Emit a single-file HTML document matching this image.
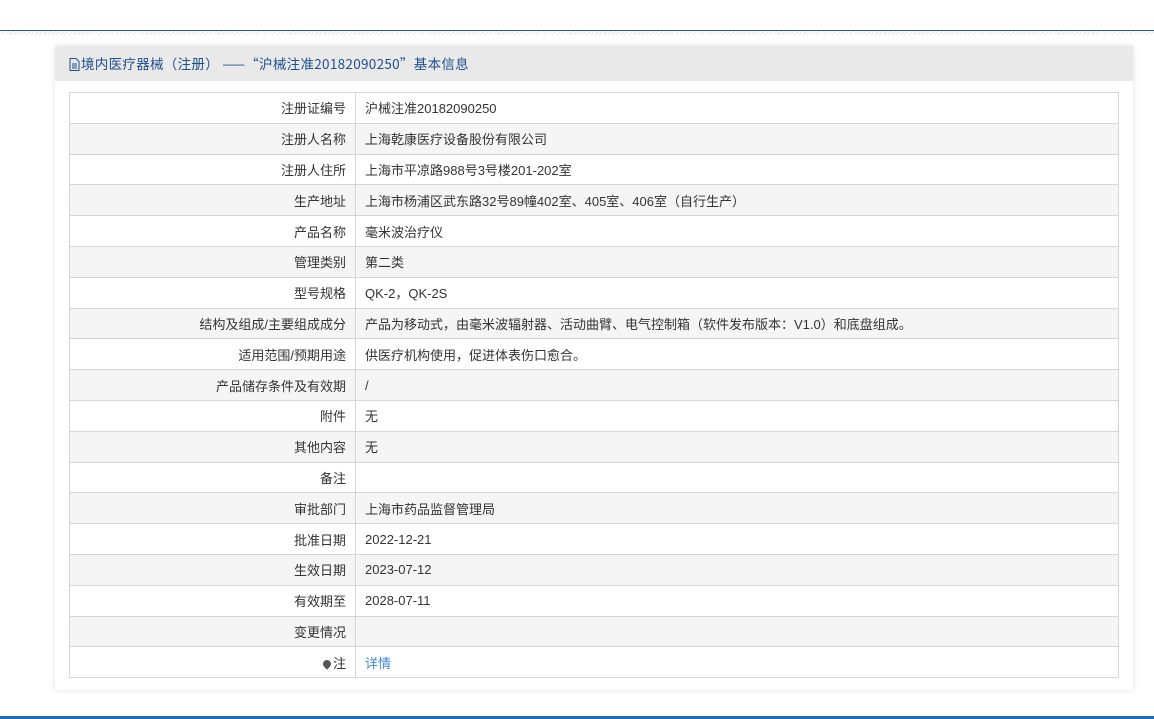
<!DOCTYPE html>
<html><head><meta charset="utf-8"><style>
*{margin:0;padding:0;box-sizing:border-box}
body{width:1154px;height:719px;background:#fff;font-family:"Liberation Sans","Noto Sans CJK SC",sans-serif;font-size:13px;color:#333;position:relative;overflow:hidden}
.topline{position:absolute;left:0;top:30px;width:1154px;height:1px;background:#2a5a9f}
.hatch{position:absolute;left:0;top:31px;width:1154px;height:4px;background:repeating-linear-gradient(135deg,#e6e6e6 0 1px,#fff 1px 3px)}
.botline{position:absolute;left:0;top:716px;width:1154px;height:3px;background:#1f6bb5}
.panel{position:absolute;left:55px;top:46px;width:1078px;height:644px;background:#fff;box-shadow:0 0 6px rgba(0,0,0,.12)}
.head{height:35px;background:#e9e9e9;color:#1d4f8f;font-size:13.5px;line-height:35px;padding-left:14px;font-family:"Noto Sans CJK SC","Liberation Sans",sans-serif;letter-spacing:0.3px}
.head svg{vertical-align:-2px;margin-right:1px}
table{position:absolute;left:14px;top:46px;width:1050px;border-collapse:collapse;border:1px solid #ccc}
td{height:30.8px;border:1px solid #d6d6d6;padding:0 9px;white-space:nowrap}
td.l{width:286px;text-align:right}
tr:nth-child(even) td{background:#f5f5f5}
a{color:#3a8ad8;text-decoration:none}
.dot{display:inline-block;width:8px;height:8px;border-radius:50% 50% 50% 0;transform:rotate(-45deg);background:#555;margin-right:2px;vertical-align:0}
</style></head><body>
<div class="topline"></div><div class="hatch"></div>
<div class="panel">
<div class="head"><svg width="11" height="13" viewBox="0 0 11 13"><path d="M1 .5h6l3 3v9H1z" fill="none" stroke="#1d4f8f"/><path d="M3 6h5M3 8h5M3 10h5" stroke="#1d4f8f"/></svg>境内医疗器械（注册） ——“沪械注准20182090250”基本信息</div>
<table>
<tr><td class="l">注册证编号</td><td>沪械注准20182090250</td></tr>
<tr><td class="l">注册人名称</td><td>上海乾康医疗设备股份有限公司</td></tr>
<tr><td class="l">注册人住所</td><td>上海市平凉路988号3号楼201-202室</td></tr>
<tr><td class="l">生产地址</td><td>上海市杨浦区武东路32号89幢402室、405室、406室（自行生产）</td></tr>
<tr><td class="l">产品名称</td><td>毫米波治疗仪</td></tr>
<tr><td class="l">管理类别</td><td>第二类</td></tr>
<tr><td class="l">型号规格</td><td>QK-2，QK-2S</td></tr>
<tr><td class="l">结构及组成/主要组成成分</td><td>产品为移动式，由毫米波辐射器、活动曲臂、电气控制箱（软件发布版本：V1.0）和底盘组成。</td></tr>
<tr><td class="l">适用范围/预期用途</td><td>供医疗机构使用，促进体表伤口愈合。</td></tr>
<tr><td class="l">产品储存条件及有效期</td><td>/</td></tr>
<tr><td class="l">附件</td><td>无</td></tr>
<tr><td class="l">其他内容</td><td>无</td></tr>
<tr><td class="l">备注</td><td></td></tr>
<tr><td class="l">审批部门</td><td>上海市药品监督管理局</td></tr>
<tr><td class="l">批准日期</td><td>2022-12-21</td></tr>
<tr><td class="l">生效日期</td><td>2023-07-12</td></tr>
<tr><td class="l">有效期至</td><td>2028-07-11</td></tr>
<tr><td class="l">变更情况</td><td></td></tr>
<tr><td class="l"><span class="dot"></span>注</td><td><a>详情</a></td></tr>
</table>
</div>
<div class="botline"></div>
</body></html>
